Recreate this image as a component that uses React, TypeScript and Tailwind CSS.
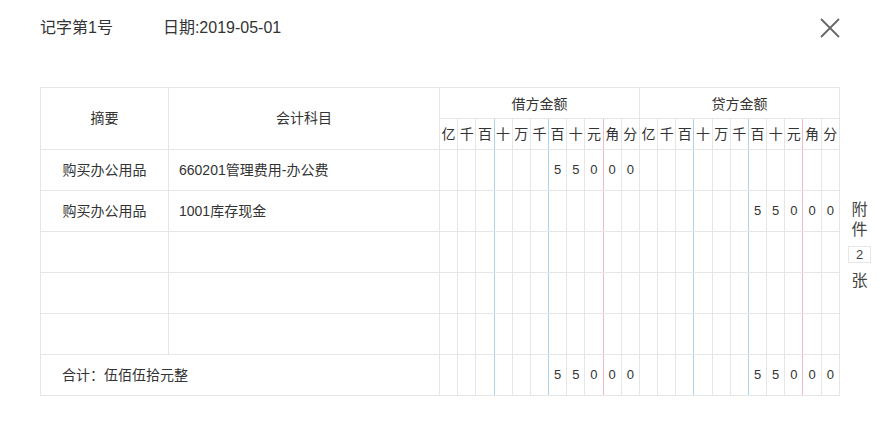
import React from "react";

const UNITS = ["亿", "千", "百", "十", "万", "千", "百", "十", "元", "角", "分"];

type Row = { summary: string; account: string; debit: string[]; credit: string[] };

// amounts are placed right-aligned into the 11 digit cells
const toCells = (digits: string) => {
  const cells = Array(11).fill("");
  const chars = digits.split("");
  chars.forEach((c, i) => {
    cells[11 - chars.length + i] = c;
  });
  return cells;
};

const rows: Row[] = [
  { summary: "购买办公用品", account: "660201管理费用-办公费", debit: toCells("55000"), credit: toCells("") },
  { summary: "购买办公用品", account: "1001库存现金", debit: toCells(""), credit: toCells("55000") },
  { summary: "", account: "", debit: toCells(""), credit: toCells("") },
  { summary: "", account: "", debit: toCells(""), credit: toCells("") },
  { summary: "", account: "", debit: toCells(""), credit: toCells("") },
];

// right border colour of a digit column: blue after 百 / 千, red after 元
const digitBorder = (i: number) => {
  if (i === 2 || i === 5) return "border-r-[#acd2ee]";
  if (i === 8) return "border-r-[#f3b8c2]";
  return "";
};

const DigitCells = ({ values }: { values: string[] }) => (
  <>
    {values.map((v, i) => (
      <td
        key={i}
        className={`border border-[#e6e6e6] ${digitBorder(i)} p-0 text-center text-[13px] text-[#333]`}
      >
        {v}
      </td>
    ))}
  </>
);

const App = () => {
  return (
    <div
      className="w-[883px] h-[422px] bg-white text-[#333] px-10"
      style={{ fontFamily: '"Liberation Sans", "Noto Sans CJK SC", sans-serif' }}
    >
      {/* Header */}
      <div className="h-[56px] flex items-center">
        <span className="text-[16px]">记字第1号</span>
        <span className="text-[16px] ml-[50px]">日期:2019-05-01</span>
        <button className="ml-auto mr-[3px] mt-[-1px] w-[20px] h-[20px] flex items-center justify-center">
          <svg width="20" height="20" viewBox="0 0 20 20" fill="none" stroke="#666" strokeWidth="1.8">
            <path d="M1 1 L19 19 M19 1 L1 19" />
          </svg>
        </button>
      </div>

      {/* Voucher table + attachment count */}
      <div className="mt-[31px] flex items-center">
        <table className="table-fixed border-collapse w-[800px] shrink-0">
          <colgroup>
            <col className="w-[128px]" />
            <col className="w-[271px]" />
            {Array.from({ length: 22 }).map((_, i) => (
              <col key={i} />
            ))}
          </colgroup>
          <thead>
            <tr className="h-[31px]">
              <th rowSpan={2} className="border border-[#e6e6e6] font-normal text-[14px]">
                摘要
              </th>
              <th rowSpan={2} className="border border-[#e6e6e6] font-normal text-[14px]">
                会计科目
              </th>
              <th colSpan={11} className="border border-[#e6e6e6] font-normal text-[14px] pt-[3px]">
                借方金额
              </th>
              <th colSpan={11} className="border border-[#e6e6e6] font-normal text-[14px] pt-[3px]">
                贷方金额
              </th>
            </tr>
            <tr className="h-[31px]">
              {[...UNITS, ...UNITS].map((u, i) => (
                <th
                  key={i}
                  className={`border border-[#e6e6e6] ${digitBorder(i % 11)} p-0 font-normal text-[14px]`}
                >
                  {u}
                </th>
              ))}
            </tr>
          </thead>
          <tbody>
            {rows.map((r, idx) => (
              <tr key={idx} className="h-[41px]">
                <td className="border border-[#e6e6e6] text-center text-[14px]">{r.summary}</td>
                <td className="border border-[#e6e6e6] pl-[10px] text-[14px]">{r.account}</td>
                <DigitCells values={r.debit} />
                <DigitCells values={r.credit} />
              </tr>
            ))}
            <tr className="h-[41px]">
              <td colSpan={2} className="border border-[#e6e6e6] pl-[21px] text-[14px]">
                合计：伍佰伍拾元整
              </td>
              <DigitCells values={toCells("55000")} />
              <DigitCells values={toCells("55000")} />
            </tr>
          </tbody>
        </table>

        <div className="ml-[8px] mt-[8px] w-[24px] flex flex-col items-center text-[16px] leading-[20px] text-[#444]">
          <span>附</span>
          <span>件</span>
          <span className="mt-[6px] mb-[8px] w-[23px] h-[17px] border border-[#e6e6e6] text-[13px] leading-[15px] text-center">
            2
          </span>
          <span>张</span>
        </div>
      </div>
    </div>
  );
};

export default App;
